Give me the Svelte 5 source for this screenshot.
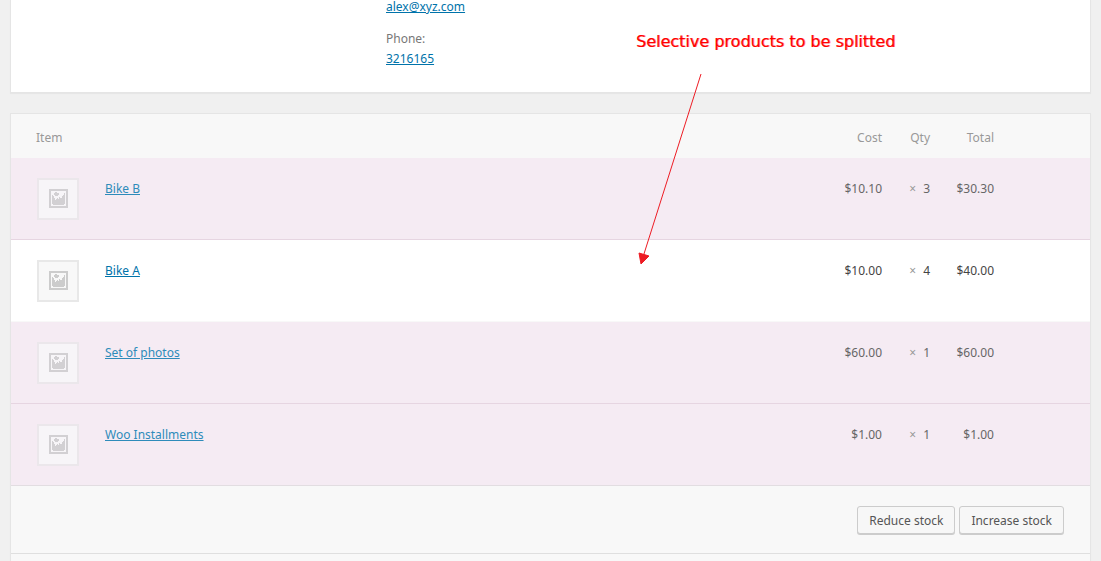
<script>
  const items = [
    { name: 'Bike B', cost: '$10.10', qty: 3, total: '$30.30', selected: true },
    { name: 'Bike A', cost: '$10.00', qty: 4, total: '$40.00', selected: false },
    { name: 'Set of photos', cost: '$60.00', qty: 1, total: '$60.00', selected: true },
    { name: 'Woo Installments', cost: '$1.00', qty: 1, total: '$1.00', selected: true }
  ];
</script>

<div class="page">
  <section class="panel details">
    <p class="field email"><a href="mailto:alex@xyz.com">alex@xyz.com</a></p>
    <p class="field">Phone:<br /><a href="tel:3216165">3216165</a></p>
  </section>

  <section class="panel items">
    <table>
      <colgroup>
        <col class="w-thumb" />
        <col />
        <col class="w-cost" />
        <col class="w-qty" />
        <col class="w-total" />
        <col class="w-actions" />
      </colgroup>
      <thead>
        <tr>
          <th class="item" colspan="2">Item</th>
          <th class="number">Cost</th>
          <th class="number">Qty</th>
          <th class="number">Total</th>
          <th></th>
        </tr>
      </thead>
      <tbody>
        {#each items as item}
          <tr class:selected={item.selected}>
            <td class="thumb">
              <span class="frame">
                <svg viewBox="0 0 19 19" width="19" height="19" shape-rendering="crispEdges" aria-hidden="true">
                  <path fill-rule="evenodd" d="M0 0H19V19H0ZM2 2V17H17V2Z" />
                  <path d="M3 6H4V7H5V9H6V11H7V10H8V9H9V10H10V8H11V9H13V7H14V6H15V4H16V15H15V16H4V15H3Z" />
                  <path d="M6 3H8V4H10V6H9V7H6V6H5V4H6Z" />
                </svg>
              </span>
            </td>
            <td><a href="#item">{item.name}</a></td>
            <td class="number">{item.cost}</td>
            <td class="number"><small>×</small>{item.qty}</td>
            <td class="number">{item.total}</td>
            <td></td>
          </tr>
        {/each}
      </tbody>
    </table>
    <div class="bulk">
      <button type="button">Reduce stock</button>
      <button type="button">Increase stock</button>
    </div>
    <div class="rest"></div>
  </section>

  <p class="note">Selective products to be splitted</p>
  <svg class="arrow" viewBox="0 0 70 200" width="70" height="200" aria-hidden="true">
    <path d="M66 9 8 192" fill="none" stroke="#ed1c24" />
    <path d="M4 188 14 191 6 199Z" fill="#ed1c24" stroke="#ed1c24" />
  </svg>
</div>

<style>
  :global(body) {
    background: #f0f0f0;
  }
  .page {
    position: relative;
    height: 100vh;
    padding: 0 10px;
    box-sizing: border-box;
    overflow: hidden;
    font: 12px/20px "Noto Sans", "Open Sans", sans-serif;
    color: #777;
  }
  .panel {
    border: 1px solid #e5e5e5;
    box-shadow: 0 1px 1px rgba(0, 0, 0, 0.04);
    background: #fff;
  }
  .details {
    border-top: 0;
    padding: 0 0 23px 375px;
    margin-bottom: 20px;
  }
  .field {
    margin: 0;
  }
  .email {
    margin-bottom: 15px;
    line-height: 14px;
  }
  a {
    color: #0073aa;
  }
  .items {
    background: #f8f8f8;
  }
  table {
    width: 100%;
    border-collapse: separate;
    border-spacing: 0;
    table-layout: fixed;
  }
  .w-thumb { width: 94px; }
  .w-cost { width: 80px; }
  .w-qty { width: 48px; }
  .w-total { width: 64px; }
  .w-actions { width: 96px; }
  th {
    height: 44px;
    padding: 4px 0 0;
    box-sizing: border-box;
    font-weight: 400;
    color: #999;
    text-align: left;
  }
  td {
    height: 82px;
    padding: 21px 0 0;
    box-sizing: border-box;
    vertical-align: top;
    background: #fff;
    border-bottom: 1px solid #f8f8f8;
    color: #444;
  }
  th.item {
    padding-left: 25px;
  }
  td.thumb {
    padding: 20px 0 0 26px;
  }
  .number {
    text-align: right;
  }
  .frame {
    display: block;
    width: 42px;
    height: 42px;
    padding: 9px 0 0 10px;
    box-sizing: border-box;
    border: 2px solid #e8e8e8;
    background: #f8f8f8;
  }
  .frame svg {
    display: block;
    fill: #ccc;
  }
  small {
    margin-right: 7px;
    font-size: 12px;
    color: #999;
  }
  .selected td {
    background: #f5ebf3;
    border-color: #e6d5e1;
    color: #666;
  }
  .selected:last-child td {
    border-color: #e2dde1;
  }
  .selected a {
    color: #2e8bba;
  }
  .selected .frame {
    background: #f7f5f8;
    border-color: #ebe7eb;
  }
  .selected svg {
    fill: #d2d0d3;
  }
  .bulk {
    display: flex;
    justify-content: flex-end;
    gap: 4px;
    padding: 20px 26px 19px;
    border-bottom: 1px solid #dfdfdf;
  }
  button {
    height: 28px;
    padding: 2px 11px 0;
    border: 1px solid #ccc;
    border-radius: 3px;
    box-shadow: 0 1px 0 #ccc;
    background: #f7f7f7;
    color: #555;
    font: inherit;
  }
  .rest {
    height: 40px;
  }
  .note {
    position: absolute;
    top: 31px;
    left: 636px;
    margin: 0;
    font: 16px/22px "DejaVu Sans", sans-serif;
    color: #f00;
    text-shadow: 1px 0 0 rgba(255, 0, 0, 0.5);
    white-space: nowrap;
  }
  .arrow {
    position: absolute;
    top: 65px;
    left: 635px;
  }
</style>
